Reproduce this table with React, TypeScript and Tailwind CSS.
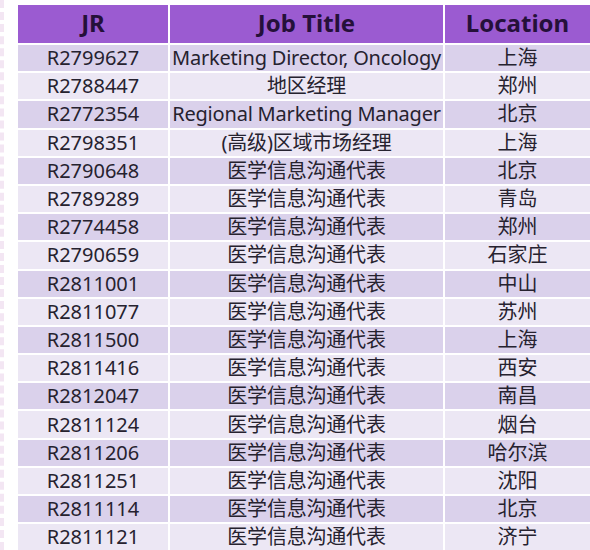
const rows: [string, string, string][] = [
  ["R2799627", "Marketing Director, Oncology", "上海"],
  ["R2788447", "地区经理", "郑州"],
  ["R2772354", "Regional Marketing Manager", "北京"],
  ["R2798351", "(高级)区域市场经理", "上海"],
  ["R2790648", "医学信息沟通代表", "北京"],
  ["R2789289", "医学信息沟通代表", "青岛"],
  ["R2774458", "医学信息沟通代表", "郑州"],
  ["R2790659", "医学信息沟通代表", "石家庄"],
  ["R2811001", "医学信息沟通代表", "中山"],
  ["R2811077", "医学信息沟通代表", "苏州"],
  ["R2811500", "医学信息沟通代表", "上海"],
  ["R2811416", "医学信息沟通代表", "西安"],
  ["R2812047", "医学信息沟通代表", "南昌"],
  ["R2811124", "医学信息沟通代表", "烟台"],
  ["R2811206", "医学信息沟通代表", "哈尔滨"],
  ["R2811251", "医学信息沟通代表", "沈阳"],
  ["R2811114", "医学信息沟通代表", "北京"],
  ["R2811121", "医学信息沟通代表", "济宁"],
]

export default function App() {
  return (
    <div
      className="h-[550px] w-[590px] overflow-hidden bg-white border-l-4 border-dashed border-[#f3e6f3] pl-[12px] pt-[3px]"
      style={{ fontFamily: '"Noto Sans", "Noto Sans CJK SC", sans-serif' }}
    >
      <table className="w-[574px] border-collapse table-fixed">
        <colgroup>
          <col className="w-[152px]" />
          <col className="w-[275px]" />
          <col className="w-[147px]" />
        </colgroup>
        <thead>
          <tr className="h-[40px] bg-[#9b5bd1] text-[#25103a]">
            <th className="border-2 border-white text-[24px] font-bold leading-none pb-[3px]">JR</th>
            <th className="border-2 border-white text-[24px] font-bold leading-none pb-[3px]">Job Title</th>
            <th className="border-2 border-white text-[24px] font-bold leading-none pb-[3px]">Location</th>
          </tr>
        </thead>
        <tbody>
          {rows.map(([jr, title, loc], i) => (
            <tr
              key={jr}
              className={`h-[28.2px] text-[#26222f] ${i % 2 === 0 ? "bg-[#dad1eb]" : "bg-[#ece7f4]"}`}
            >
              <td className="border-2 border-white text-center text-[20px] leading-none">{jr}</td>
              <td className="border-2 border-white text-center text-[20px] leading-none tracking-[-0.2px] whitespace-nowrap">{title}</td>
              <td className="border-2 border-white text-center text-[20px] leading-none">{loc}</td>
            </tr>
          ))}
        </tbody>
      </table>
    </div>
  )
}
